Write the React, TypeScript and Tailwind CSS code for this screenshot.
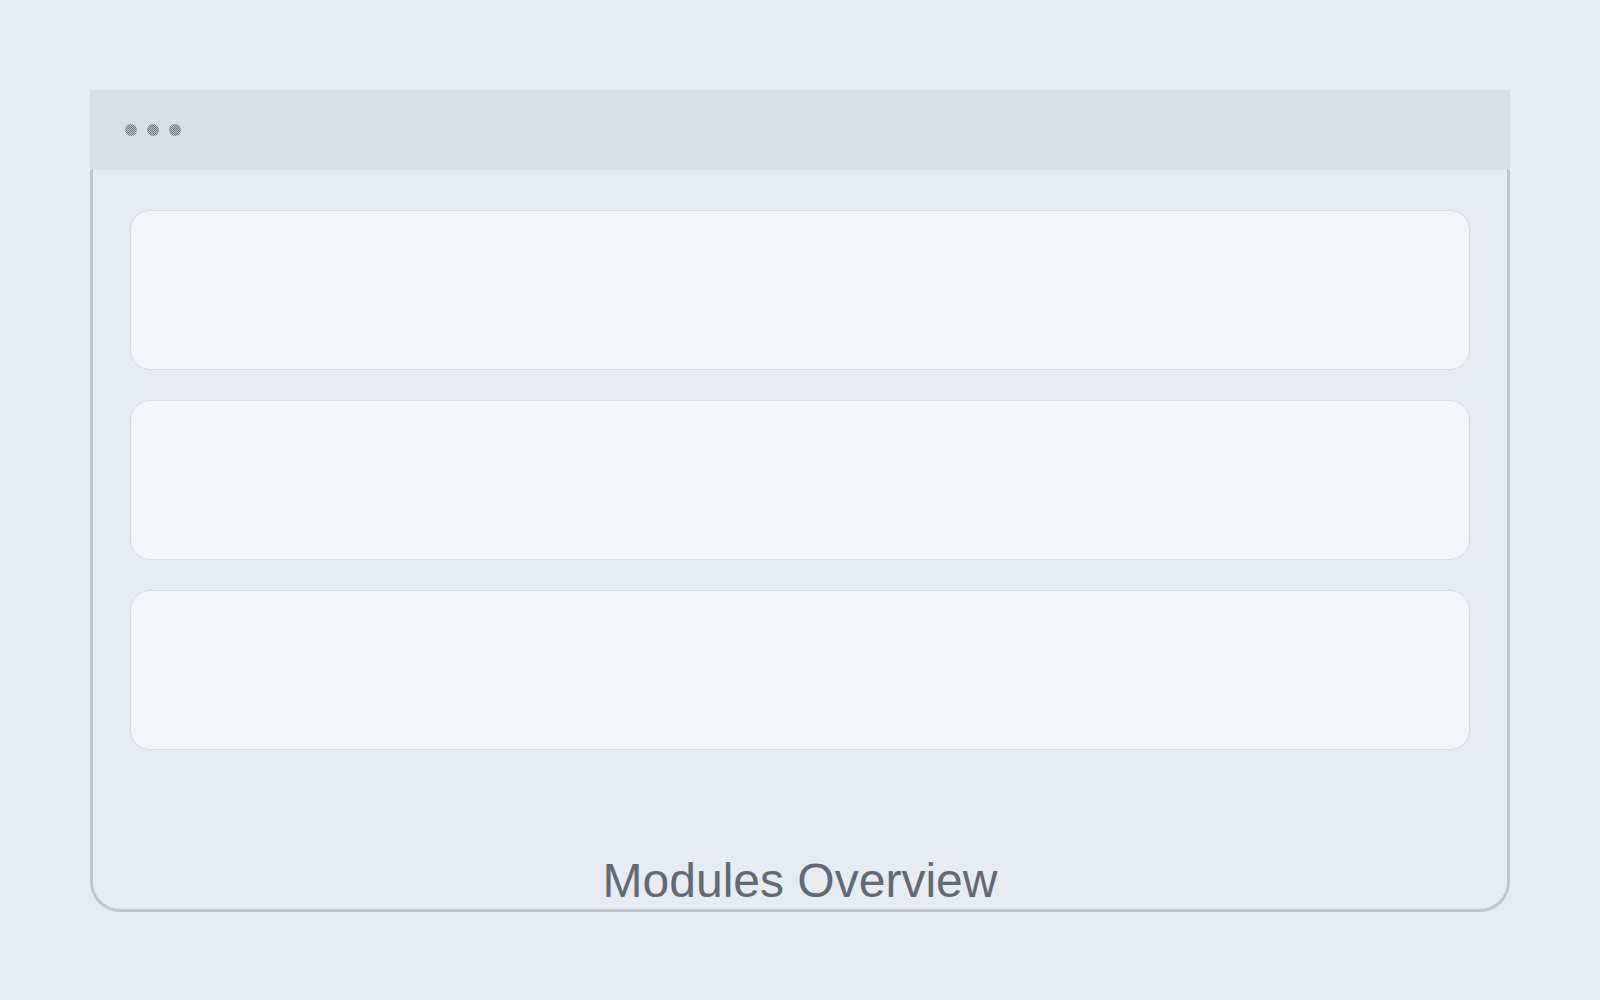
import React from 'react';

const App: React.FC = () => {
  const cards = [0, 1, 2];

  return (
    <div className="min-h-screen w-full bg-[#e7ecf3] pt-[90px] font-['Liberation_Sans',Arial,sans-serif]">
      <div className="mx-auto flex w-[1420px] flex-col">
        {/* title bar */}
        <div className="flex h-[80px] items-center gap-[10px] bg-[#d8dfe7] pl-[35px]">
          {cards.map(i => (
            <span
              key={i}
              className="block h-3 w-3 rounded-full bg-[#949ca6] bg-[repeating-conic-gradient(#6a737e_0_25%,#bcc4cd_0_50%)] bg-[length:2px_2px]"
            />
          ))}
        </div>

        {/* body */}
        <div className="flex h-[742px] flex-col rounded-b-[30px] border-x-[3px] border-b-[3px] border-[#bec6d0] px-[37px] pt-[40px] pb-[4px]">
          <div className="flex flex-col gap-[30px]">
            {cards.map(i => (
              <div
                key={i}
                className="h-[160px] rounded-[20px] border border-[#d2dae4] bg-[#f4f7fa]"
              />
            ))}
          </div>
          <div className="mt-auto text-center text-[48px] leading-[48px] text-[#5f6a75]">
            Modules Overview
          </div>
        </div>
      </div>
    </div>
  );
};

export default App;
